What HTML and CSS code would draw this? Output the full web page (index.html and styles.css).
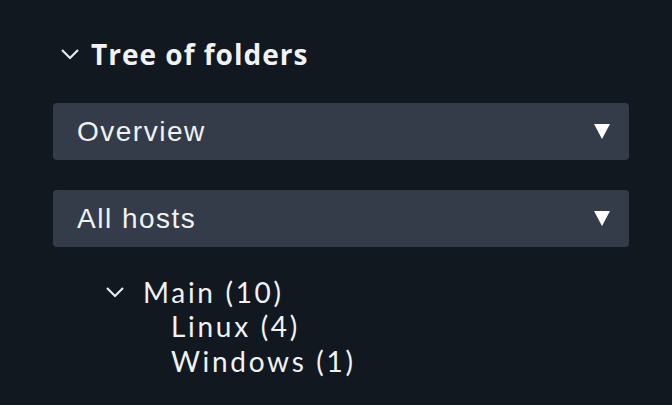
FILE: index.html
```html
<!DOCTYPE html>
<html>
<head>
<meta charset="utf-8">
<link rel="stylesheet" href="styles.css">
</head>
<body>
<div class="snapin">
  <div class="head">
    <svg class="chev" width="20" height="14" viewBox="0 0 20 14"><path d="M2 3 L10 11 L18 3" fill="none" stroke="#e6e8eb" stroke-width="2.2"/></svg>
    <span class="title">Tree of folders</span>
  </div>
  <div class="select"><span>Overview</span><span class="tri"></span></div>
  <div class="select"><span>All hosts</span><span class="tri"></span></div>
  <ul class="tree">
    <li class="node">
      <div class="row">
        <svg class="chev small" width="20" height="14" viewBox="0 0 20 14"><path d="M2 3 L10 11 L18 3" fill="none" stroke="#e6e8eb" stroke-width="2.2"/></svg>
        <span>Main (10)</span>
      </div>
      <ul class="children">
        <li>Linux (4)</li>
        <li>Windows (1)</li>
      </ul>
    </li>
  </ul>
</div>
</body>
</html>
```
FILE: styles.css
```css
html, body {
  margin: 0;
  padding: 0;
  background: #121820;
  width: 672px;
  height: 405px;
  overflow: hidden;
}
body {
  font-family: "Liberation Sans", Arial, sans-serif;
  color: #f0f2f4;
}
.snapin {
  padding: 36px 0 0 53px;
  width: 576px;
}
.head {
  display: flex;
  align-items: center;
  height: 36px;
  padding-left: 7px;
  gap: 11px;
}
.title {
  font-family: "Open Sans", sans-serif;
  font-size: 28px;
  font-weight: bold;
  letter-spacing: 1px;
}
.select {
  margin-top: 31px;
  height: 57px;
  background: #333c48;
  border-radius: 4px;
  display: flex;
  align-items: center;
  justify-content: space-between;
  padding: 0 19px 0 24px;
  font-size: 28px;
  letter-spacing: 1.5px;
}
.select + .select {
  margin-top: 30px;
}
.tri {
  width: 0;
  height: 0;
  border-left: 8.5px solid transparent;
  border-right: 8.5px solid transparent;
  border-top: 15px solid #ffffff;
}
.tree {
  list-style: none;
  margin: 27px 0 0 0;
  padding: 0 0 0 52px;
  font-family: Lato, sans-serif;
  font-size: 28px;
  letter-spacing: 2.7px;
}
.row {
  display: flex;
  align-items: center;
  gap: 18px;
  height: 35px;
}
.children {
  list-style: none;
  margin: 0;
  padding: 0 0 0 66px;
}
.children li {
  height: 35px;
  line-height: 35px;
}
```
